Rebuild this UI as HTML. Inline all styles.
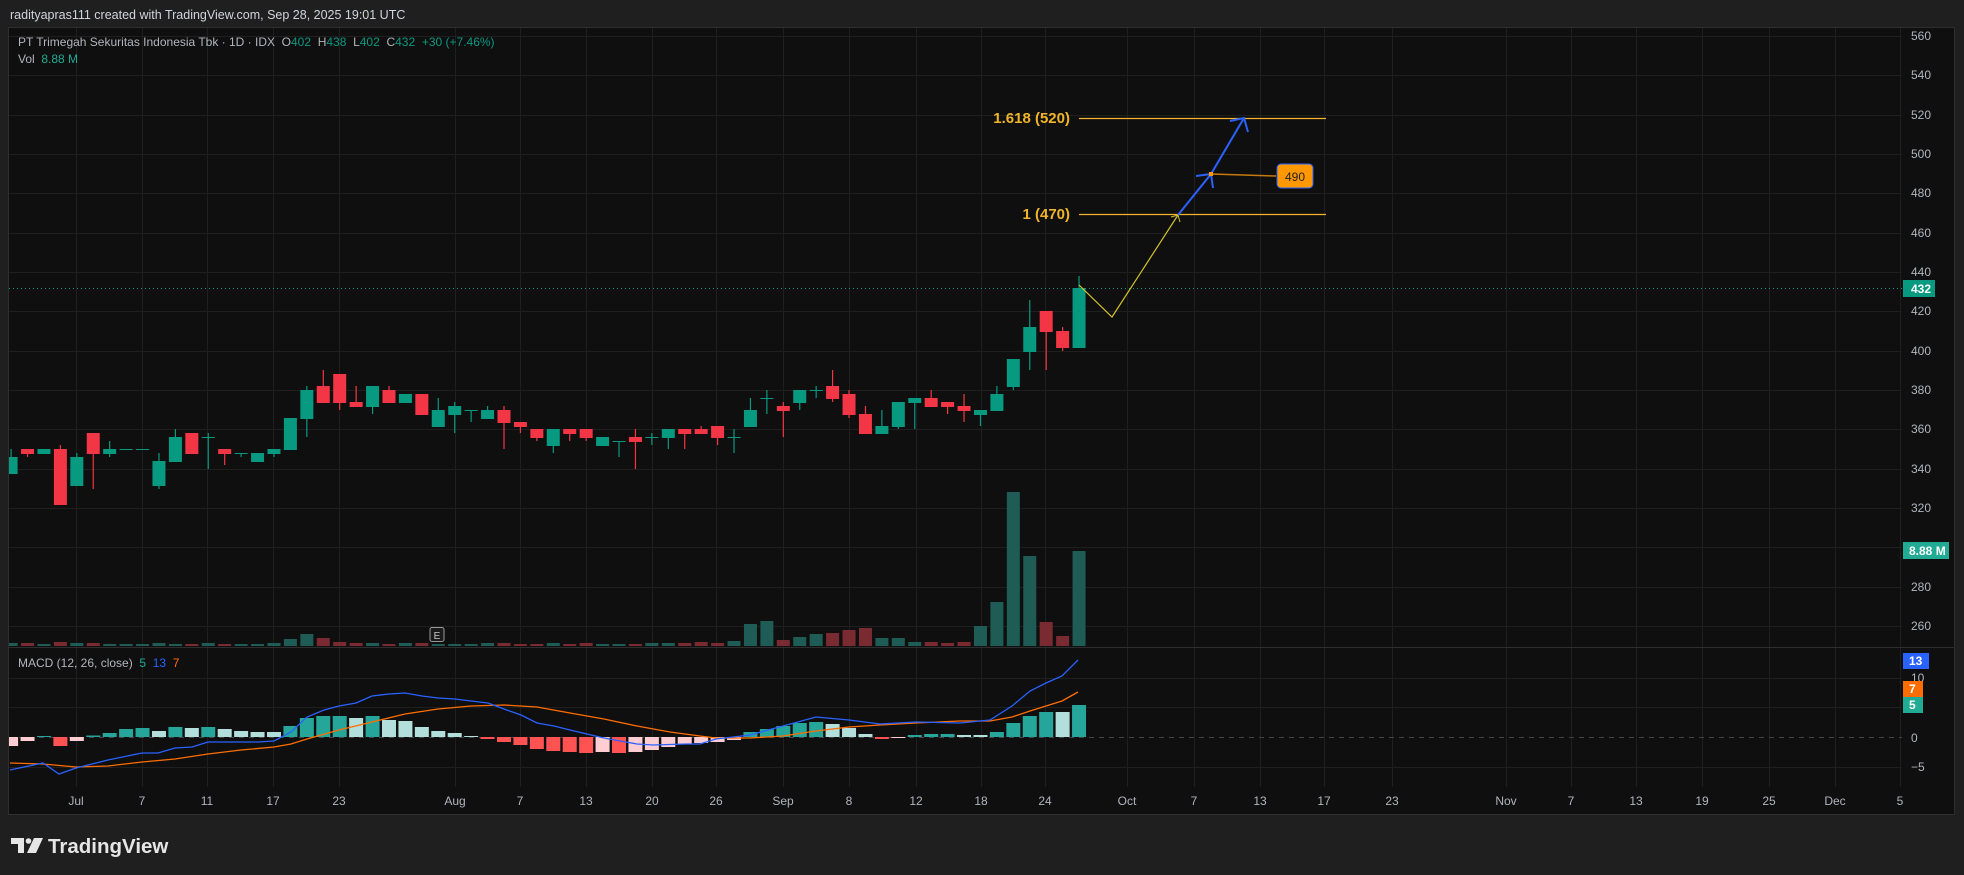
<!DOCTYPE html>
<html><head><meta charset="utf-8"><style>
html,body{margin:0;padding:0;background:#1f1f1f;width:1964px;height:875px;overflow:hidden;font-family:"Liberation Sans",sans-serif}
svg{position:absolute;left:0;top:0}
</style></head><body>
<svg id="s" width="1964" height="875" xmlns="http://www.w3.org/2000/svg" font-family="Liberation Sans, sans-serif">
<rect x="0" y="0" width="1964" height="875" fill="#1f1f1f"/>
<text x="10" y="19" fill="#d1d4dc" font-size="12.5">radityapras111 created with TradingView.com, Sep 28, 2025 19:01 UTC</text>
<rect x="8.5" y="27.5" width="1946" height="787" fill="#0f0f0f" stroke="#2e2e2e"/>
<g id="grid" stroke="#1f1f1f" stroke-width="1"></g>
<line x1="9" y1="647.5" x2="1954" y2="647.5" stroke="#2e2e2e"/>
<line x1="9" y1="737.5" x2="1902" y2="737.5" stroke="#444" stroke-dasharray="5,5"/>
<defs><clipPath id="cm"><rect x="9" y="28" width="1893" height="619"/></clipPath><clipPath id="cd"><rect x="9" y="648" width="1893" height="166"/></clipPath></defs>
<g id="vol" clip-path="url(#cm)"></g>
<g id="cand" clip-path="url(#cm)"></g>
<g id="hist" clip-path="url(#cd)"></g>
<g clip-path="url(#cd)" fill="none" stroke-width="1.3">
<polyline stroke="#ff6d00" points="10,763 43,764 76,767 108,766 142,762 175,759 208,754 241,750 274,747 291,744 307,739 339,730 372,722 405,714 438,709 471,706 504,705 537,707 570,713 604,719 637,726 670,732 700,736 716,738 750,738 783,736 816,731 849,727 880,725 916,723 960,721 990,721 1012,717 1030,711 1046,706 1062,701 1078,692"/>
<polyline stroke="#2962ff" points="10,770 43,763 59,774 76,768 108,760 142,753 158,753 175,748 192,747 208,742 225,742 258,742 274,741 291,732 307,717 324,710 339,706 356,703 372,696 389,694 405,693 422,696 438,698 455,699 471,701 488,703 504,709 521,715 537,723 554,726 570,730 587,734 604,738 620,741 637,744 653,745 686,744 700,744 716,739 750,735 783,726 816,717 849,720 880,724 916,722 960,723 990,720 1012,706 1030,691 1046,683 1062,676 1078,660"/>
</g>
<line x1="9" y1="288.5" x2="1902" y2="288.5" stroke="#089981" stroke-dasharray="1,3"/>
<line x1="1079" y1="118.5" x2="1326" y2="118.5" stroke="#f7b22b" stroke-width="1.2"/>
<line x1="1079" y1="214.5" x2="1326" y2="214.5" stroke="#f7b22b" stroke-width="1.2"/>
<text x="1070" y="123" text-anchor="end" fill="#f0b429" font-size="15" font-weight="bold">1.618 (520)</text>
<text x="1070" y="219" text-anchor="end" fill="#f0b429" font-size="15" font-weight="bold">1 (470)</text>
<polyline points="1079,285 1112,317 1178,215" fill="none" stroke="#d4c22a" stroke-width="1.2"/>
<polyline points="1171,217 1178,215 1180,222" fill="none" stroke="#d4c22a" stroke-width="1"/>
<line x1="1211" y1="174" x2="1276" y2="176" stroke="#c77a10" stroke-width="1.5"/>
<polyline points="1178,215 1211,174 1244,118" fill="none" stroke="#2962ff" stroke-width="2"/>
<polyline points="1196,176 1211,174 1213,188" fill="none" stroke="#2962ff" stroke-width="2"/>
<polyline points="1230,121 1244,118 1248,132" fill="none" stroke="#2962ff" stroke-width="2"/>
<rect x="1209" y="172" width="4" height="4" fill="#ff9800"/>
<rect x="1277" y="164" width="36" height="24" rx="4" fill="#ff9800" stroke="#2962ff"/>
<text x="1295" y="181" text-anchor="middle" fill="#222" font-size="12">490</text>
<rect x="430" y="627.5" width="14" height="14" rx="2" fill="#1a1a1a" stroke="#999"/>
<text x="437" y="639" text-anchor="middle" fill="#ccc" font-size="10">E</text>
<text x="18" y="46" font-size="12" fill="#b2b5be">PT Trimegah Sekuritas Indonesia Tbk · 1D · IDX&#160;&#160;O<tspan fill="#089981">402</tspan>&#160;&#160;H<tspan fill="#089981">438</tspan>&#160;&#160;L<tspan fill="#089981">402</tspan>&#160;&#160;C<tspan fill="#089981">432</tspan>&#160;&#160;<tspan fill="#089981">+30 (+7.46%)</tspan></text>
<text x="18" y="63" font-size="12" fill="#b2b5be">Vol&#160;&#160;<tspan fill="#22ab94">8.88 M</tspan></text>
<text x="18" y="667" font-size="12" fill="#b2b5be">MACD (12, 26, close)&#160;&#160;<tspan fill="#22ab94">5</tspan>&#160;&#160;<tspan fill="#2962ff">13</tspan>&#160;&#160;<tspan fill="#ff6d00">7</tspan></text>
<g font-size="12" fill="#b2b5be" id="pax"></g>
<rect x="1903" y="280" width="32" height="17" fill="#089981"/>
<text x="1911" y="293" font-size="12" fill="#fff" font-weight="bold">432</text>
<rect x="1903" y="542" width="46" height="17" fill="#22ab94"/>
<text x="1909" y="555" font-size="12" fill="#fff" font-weight="bold">8.88 M</text>
<g font-size="12" fill="#b2b5be">
<text x="1911" y="682">10</text><text x="1911" y="742">0</text><text x="1911" y="771">−5</text>
</g>
<rect x="1903" y="653" width="26" height="16" fill="#2962ff"/><text x="1909" y="665" font-size="12" fill="#fff" font-weight="bold">13</text>
<rect x="1903" y="681" width="20" height="16" fill="#ff6d00"/><text x="1909" y="693" font-size="12" fill="#fff" font-weight="bold">7</text>
<rect x="1903" y="697" width="20" height="16" fill="#22ab94"/><text x="1909" y="709" font-size="12" fill="#fff" font-weight="bold">5</text>
<g id="tax" font-size="12" fill="#b2b5be" text-anchor="middle"></g>
<g fill="#e6e6e6">
<polygon points="11,838 24,838 24,853 18,853 18,844 11,844"/>
<circle cx="28.5" cy="841" r="2.8"/>
<polygon points="34,838 43,838 36,853 27,853"/>
<text x="48" y="853" font-size="20.5" font-weight="bold">TradingView</text>
</g>
</svg>
<script>
var NS="http://www.w3.org/2000/svg";
function el(p,t,a,txt){var e=document.createElementNS(NS,t);for(var k in a)e.setAttribute(k,a[k]);if(txt!=null)e.textContent=txt;document.getElementById(p).appendChild(e);return e;}
var tx=[[76,"Jul"],[142,"7"],[207,"11"],[273,"17"],[339,"23"],[455,"Aug"],[520,"7"],[586,"13"],[652,"20"],[716,"26"],[783,"Sep"],[849,"8"],[916,"12"],[981,"18"],[1045,"24"],[1127,"Oct"],[1194,"7"],[1260,"13"],[1324,"17"],[1392,"23"],[1506,"Nov"],[1571,"7"],[1636,"13"],[1702,"19"],[1769,"25"],[1835,"Dec"],[1900,"5"]];
tx.forEach(function(t){el("grid","line",{x1:t[0]+.5,y1:28,x2:t[0]+.5,y2:787});el("tax","text",{x:t[0],y:805},t[1]);});
for(var k=0;k<16;k++){var y=Math.round(36+k*39.33);el("grid","line",{x1:9,y1:y+.5,x2:1902,y2:y+.5});el("pax","text",{x:1911,y:y+4},String(560-20*k));}
[678,707,767].forEach(function(y){el("grid","line",{x1:9,y1:y+.5,x2:1902,y2:y+.5});});
var C=[["G",457,474,449],["R",449,454,449,457],["G",449,454],["R",449,505,445],["G",457,486,453],["R",433,454,433,489],["G",449,454,441,457],["G",449,450],["G",449,450],["G",461,486,453,489],["G",437,462,429],["R",433,454],["G",437,438,433,469],["R",449,454,449,465],["G",453,454,453,457],["G",453,462],["G",449,454,449,457],["G",418,450],["G",390,419,386,437],["R",386,403,370],["R",374,403,374,410],["R",402,407,386],["G",386,407,386,414],["R",390,403,386],["G",394,403],["R",394,415],["G",410,427,398],["G",406,415,402,433],["G",410,411,410,422],["G",410,419,406],["R",410,423,406,449],["R",422,427,422,433],["R",429,438,429,441],["G",429,446,429,453],["R",429,434,429,441],["R",429,438,429,441],["G",437,446],["G",441,442,441,457],["R",437,442,429,469],["G",437,438,433,445],["G",429,438,429,449],["R",429,434,429,449],["R",429,434,426],["R",426,438,426,445],["G",437,438,429,453],["G",410,427,398],["G",398,399,390,414],["R",406,411,402,437],["G",390,403,390,410],["G",390,391,386,398],["R",386,399,370,402],["R",394,415,390,418],["R",414,434,406],["G",426,434,410],["G",402,427,402,429],["G",398,403,398,429],["R",398,407,390],["R",402,407,402,414],["R",406,411,394,422],["G",410,415,410,426],["G",394,411,386],["G",359,387,359,390],["G",327,352,300,370],["R",311,332,311,370],["R",331,348,327,351],["G",288,348,276]];
var V=[3,3,2,4,3,3,2,2,2,3,2,2,3,2,2,2,3,7,12,8,4,3,3,2,3,3,2,2,2,3,3,2,2,3,2,3,2,2,2,3,3,3,4,3,5,22,25,6,9,12,13,16,18,8,8,4,4,3,4,20,44,154,90,24,10,95];
var H=[-9,-4,1,-9,-4,1.5,4,8,9,6,10,9,10,8,6,5,5,11,19,21,21,19,21,17,16,10,6,4,1,-2,-5,-8,-12,-14,-15,-16,-15,-16,-15,-13,-10,-7,-6,-5,-3,5,8,11,14,15,13,9,3,-2,-1,2,3,3,2,2,5,14,21,25,25,32];
var HC=["#ffcdd2","#ffcdd2","#26a69a","#ff5252","#ffcdd2","#26a69a","#26a69a","#26a69a","#26a69a","#b2dfdb","#26a69a","#b2dfdb","#26a69a","#b2dfdb","#b2dfdb","#b2dfdb","#b2dfdb","#26a69a","#26a69a","#26a69a","#26a69a","#b2dfdb","#26a69a","#b2dfdb","#b2dfdb","#b2dfdb","#b2dfdb","#b2dfdb","#b2dfdb","#ff5252","#ff5252","#ff5252","#ff5252","#ff5252","#ff5252","#ff5252","#ffcdd2","#ff5252","#ffcdd2","#ffcdd2","#ffcdd2","#ffcdd2","#ffcdd2","#ffcdd2","#ffcdd2","#26a69a","#26a69a","#26a69a","#26a69a","#26a69a","#b2dfdb","#b2dfdb","#b2dfdb","#ff5252","#ffcdd2","#26a69a","#26a69a","#26a69a","#b2dfdb","#b2dfdb","#26a69a","#26a69a","#26a69a","#26a69a","#b2dfdb","#26a69a"];
for(var i=0;i<66;i++){var x=11.1+16.43*i,c=C[i],col=c[0]=="G"?"#089981":"#f23645";
 var wt=c[3]!=null?c[3]:c[1],wb=c[4]!=null?c[4]:c[2];
 el("cand","rect",{x:x-.6,y:wt,width:1.2,height:Math.max(1,wb-wt),fill:col});
 el("cand","rect",{x:x-6.5,y:c[1],width:13,height:Math.max(1,c[2]-c[1]),fill:col});
 el("vol","rect",{x:x-6.5,y:646-V[i],width:13,height:V[i],fill:c[0]=="G"?"#1e5c55":"#7a2b31"});
 var h=H[i];el("hist","rect",{x:x-7,y:h>0?737-h:737,width:14,height:Math.abs(h),fill:HC[i]});
}
</script>
</body></html>
